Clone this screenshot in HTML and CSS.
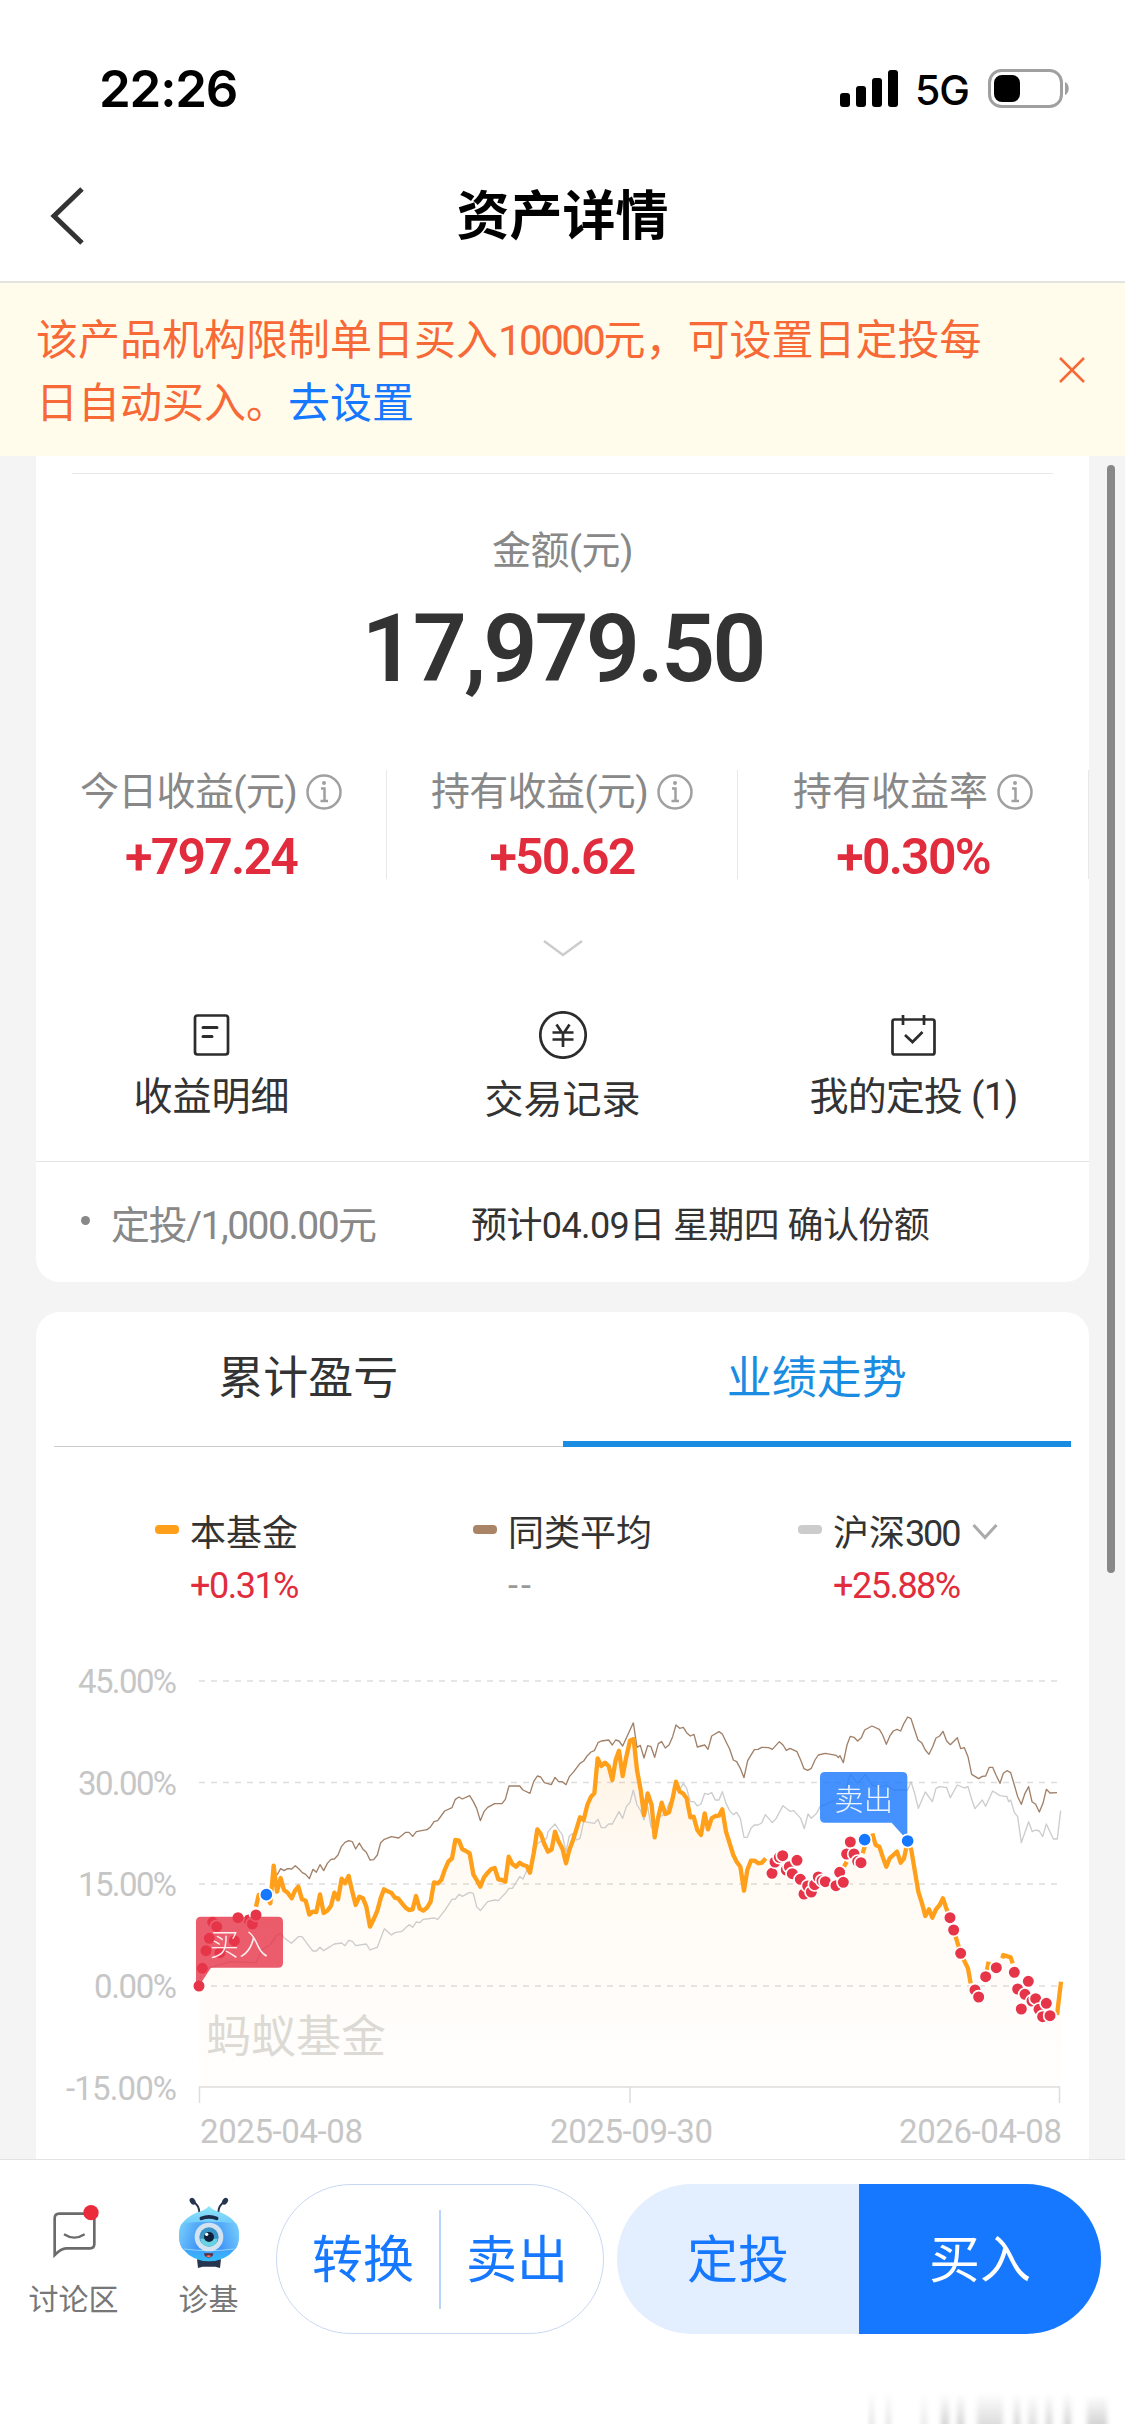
FILE: index.html
```html
<!DOCTYPE html>
<html lang="zh-CN">
<head>
  <meta charset="UTF-8">
  <meta name="viewport" content="width=device-width, initial-scale=1.0">
  <title>资产详情</title>
  <link rel="stylesheet" href="styles.css">
</head>
<body>
  <div class="screen">
    <!-- Status bar -->
    <div class="status-bar">
      <span class="time">22:26</span>
      <div class="status-icons">
        <svg class="signal" width="60" height="38" viewBox="0 0 60 38">
          <rect x="0" y="23" width="10" height="14" rx="3"/>
          <rect x="16" y="16" width="10" height="21" rx="3"/>
          <rect x="32" y="8" width="10" height="29" rx="3"/>
          <rect x="48" y="0" width="10" height="37" rx="3"/>
        </svg>
        <span class="network">5G</span>
        <svg class="battery" width="83" height="40" viewBox="0 0 83 40">
          <rect x="1.5" y="1.5" width="72" height="36" rx="12" fill="none" stroke="#a0a0a0" stroke-width="3"/>
          <rect x="6" y="6" width="26" height="27" rx="8" fill="#000"/>
          <path d="M77 13c5 2 5 11 0 13z" fill="#a0a0a0"/>
        </svg>
      </div>
    </div>

    <!-- Nav bar -->
    <header class="nav-bar">
      <svg class="back" width="36" height="60" viewBox="0 0 36 60"><path d="M32 3L4 30l28 27"/></svg>
      <h1>资产详情</h1>
    </header>

    <!-- Notice -->
    <div class="notice">
      <div class="notice-text">
        <p><span>该产品机构限制单日买入</span><span class="tight">10000</span><span>元，可设置日定投每</span></p>
        <p><span>日自动买入。</span><a href="#">去设置</a></p>
      </div>
      <svg class="close" width="26" height="26" viewBox="0 0 26 26"><path d="M1 1l24 24M25 1L1 25"/></svg>
    </div>

    <main class="main-content">
      <div class="scrollbar"></div>

      <!-- Asset summary -->
      <section class="card summary">
        <div class="top-line"></div>
        <div class="amount-label">金额(元)</div>
        <div class="amount">17,979.50</div>

        <div class="stats">
          <div class="stat">
            <div class="stat-label">今日收益(元)
              <svg class="info" viewBox="0 0 36 36"><circle cx="18" cy="18" r="16.5"/><path d="M15 14.5h3.5v12.5M14.5 27h7.5"/><circle class="dot" cx="18" cy="9" r="2"/></svg>
            </div>
            <div class="stat-value">+797.24</div>
          </div>
          <div class="stat">
            <div class="stat-label">持有收益(元)
              <svg class="info" viewBox="0 0 36 36"><circle cx="18" cy="18" r="16.5"/><path d="M15 14.5h3.5v12.5M14.5 27h7.5"/><circle class="dot" cx="18" cy="9" r="2"/></svg>
            </div>
            <div class="stat-value">+50.62</div>
          </div>
          <div class="stat">
            <div class="stat-label rate">持有收益率
              <svg class="info" viewBox="0 0 36 36"><circle cx="18" cy="18" r="16.5"/><path d="M15 14.5h3.5v12.5M14.5 27h7.5"/><circle class="dot" cx="18" cy="9" r="2"/></svg>
            </div>
            <div class="stat-value">+0.30%</div>
          </div>
        </div>

        <svg class="expand" width="40" height="18" viewBox="0 0 40 18"><path d="M1 2l19 14L39 2"/></svg>

        <div class="actions">
          <div class="action">
            <svg width="48" height="48" viewBox="0 0 48 48">
              <rect x="7" y="4.500" width="33" height="39" rx="2.5"/>
              <path d="M15 16.500h14M15 25.500h9" stroke-width="3" stroke-linecap="round"/>
            </svg>
            <span>收益明细</span>
          </div>
          <div class="action action-record">
            <svg width="48" height="48" viewBox="0 0 48 48">
              <circle cx="24" cy="24" r="22.700"/>
              <path d="M17.500 13.500l5 7.500M30.500 13.500l-5 7.500M13.500 21.500h21M13.500 28.500h21M24 21.500v14.500"/>
            </svg>
            <span>交易记录</span>
          </div>
          <div class="action">
            <svg width="48" height="48" viewBox="0 0 48 48">
              <rect x="2.500" y="8.500" width="42" height="35" rx="2"/>
              <path d="M13 4v10M34 4v10M15 24l7.500 7L32.500 21"/>
            </svg>
            <span class="my-plan">我的定投 (1)</span>
          </div>
        </div>

        <div class="plan">
          <span class="bullet"></span>
          <span class="plan-name">定投/1,000.00元</span>
          <span class="plan-info">预计04.09日 星期四 确认份额</span>
        </div>
      </section>

      <!-- Performance -->
      <section class="card performance">
        <div class="tabs">
          <div class="tab">累计盈亏</div>
          <div class="tab active">业绩走势</div>
        </div>

        <div class="legend">
          <div class="legend-item">
            <i class="swatch fund"></i>
            <div>
              <div class="legend-name">本基金</div>
              <div class="legend-value">+0.31%</div>
            </div>
          </div>
          <div class="legend-item">
            <i class="swatch average"></i>
            <div>
              <div class="legend-name">同类平均</div>
              <div class="legend-value none">--</div>
            </div>
          </div>
          <div class="legend-item">
            <i class="swatch index"></i>
            <div>
              <div class="legend-name">沪深<span class="tight">300</span></div>
              <div class="legend-value">+25.88%</div>
            </div>
            <svg class="more" width="26" height="18" viewBox="0 0 26 18"><path d="M1.500 2L13 14.500 24.500 2"/></svg>
          </div>
        </div>

        <svg class="chart" width="1053" height="519" viewBox="0 0 1053 519">
          <defs>
            <linearGradient id="fill" gradientUnits="userSpaceOnUse" x1="0" y1="300" x2="0" y2="1341">
              <stop offset="0" stop-color="#ff9f1a" stop-opacity=".12"/>
              <stop offset=".35" stop-color="#ff9f1a" stop-opacity=".05"/>
              <stop offset="1" stop-color="#ff9f1a" stop-opacity=".01"/>
            </linearGradient>
          </defs>

          <!-- Grid -->
          <g class="grid">
            <path d="M163 41h861M163 142.500h861M163 244h861M163 346h861" stroke-dasharray="6 6"/>
            <path d="M163.500 463v-16h860v16M594 447v16"/>
          </g>
          <g class="axis-y">
            <text x="141" y="53" textLength="99">45.00%</text>
            <text x="141" y="155" textLength="99">30.00%</text>
            <text x="141" y="256" textLength="99">15.00%</text>
            <text x="141" y="358" textLength="83">0.00%</text>
            <text x="141" y="460" textLength="111">-15.00%</text>
          </g>
          <g class="axis-x">
            <text x="164" y="503" textLength="163">2025-04-08</text>
            <text x="514" y="503" textLength="163">2025-09-30</text>
            <text x="863" y="503" textLength="163">2026-04-08</text>
          </g>
          <text class="watermark" x="170" y="413">蚂蚁基金</text>

          <g transform="translate(144 0) scale(.33333)">
            <!-- first half -->
            <polygon fill="url(#fill)" points="57,1341 57,1038 67,985 78,932 88,893 98,845 120,940 163,902 174,832 206,840 228,825 236,765 259,763 271,790 281,677 291,755 302,714 312,750 335,775 355,740 366,778 377,782 388,824 409,816 420,763 431,819 453,797 463,758 474,778 485,716 495,730 506,708 527,795 538,770 549,775 570,860 592,812 612,748 634,758 655,776 687,810 698,808 708,768 719,806 730,812 752,785 762,727 784,720 805,665 816,655 826,600 837,602 847,628 869,640 880,703 901,740 912,712 944,684 955,718 976,725 986,650 997,672 1019,668 1040,678 1050,698 1072,568 1104,635 1115,628 1125,575 1158,670 1200,532 1211,540 1222,495 1243,460 1253,355 1275,368 1297,420 1317,332 1328,408 1350,302 1361,298 1361,1341"/>
            <polyline class="line-index" points="57,1038 67,990 150,965 228,968 245,930 270,915 291,885 302,880 312,893 334,910 355,890 366,890 388,920 399,933 409,933 420,922 431,932 463,912 485,909 495,917 506,901 517,904 527,917 559,912 570,930 592,922 613,866 634,885 645,878 666,874 687,854 698,862 709,846 719,848 730,838 762,834 773,838 794,812 816,778 826,777 837,763 847,769 869,757 880,760 890,800 901,812 923,785 944,780 955,782 976,760 987,745 997,745 1019,710 1029,717 1040,692 1050,690 1061,655 1072,610 1100,595 1104,575 1125,552 1147,585 1158,635 1168,588 1179,580 1190,600 1200,595 1211,545 1243,550 1254,538 1264,563 1275,563 1286,552 1297,552 1317,515 1328,535 1339,500 1350,487 1360,450"/>
            <polyline class="line-average" points="291,705 302,686 312,692 323,686 335,687 346,677 357,687 367,698 377,703 388,716 399,688 409,697 420,674 431,692 442,670 453,658 463,657 474,645 484,620 495,607 506,602 517,605 527,627 538,609 549,628 559,637 570,660 581,659 592,645 602,608 613,598 634,590 656,594 677,577 687,577 698,589 709,575 741,569 752,560 762,545 773,542 794,513 816,503 826,478 837,471 847,477 869,467 880,485 890,505 901,542 912,515 923,502 944,491 966,491 976,478 987,438 1019,438 1029,450 1050,460 1061,425 1072,408 1082,411 1093,428 1114,434 1125,412 1136,425 1147,425 1158,434 1168,410 1179,398 1200,370 1211,363 1222,347 1233,336 1243,332 1254,308 1264,303 1286,300 1297,315 1307,300 1317,303 1328,318 1360,248"/>
            <polyline class="line-fund" points="228,800 236,765 259,763 271,790 281,677 291,755 302,714 312,750 323,758 335,775 345,752 355,740 366,778 377,782 388,824 398,815 409,816 420,763 431,819 442,812 453,797 463,758 474,778 485,716 495,730 506,708 517,755 527,795 538,770 549,775 559,800 570,860 581,838 592,812 602,775 612,748 623,754 634,758 645,773 655,776 666,790 677,803 687,810 698,808 708,768 719,806 730,812 741,803 752,785 762,727 773,730 784,720 794,690 805,665 816,655 826,600 837,602 847,628 858,633 869,640 880,703 890,720 901,740 912,712 923,698 933,688 944,684 955,718 966,720 976,725 986,650 997,672 1008,680 1019,668 1029,675 1040,678 1050,698 1061,640 1072,568 1083,583 1093,612 1104,635 1115,628 1125,575 1136,605 1147,625 1158,670 1168,630 1179,600 1190,565 1200,532 1211,540 1222,495 1233,470 1243,460 1253,355 1264,378 1275,368 1286,378 1297,420 1307,360 1317,332 1328,408 1339,350 1350,302 1361,298"/>

            <g class="buy">
              <circle cx="98" cy="847" r="19"/>
              <circle cx="110" cy="860" r="19"/>
              <circle cx="88" cy="895" r="19"/>
              <circle cx="78" cy="932" r="19"/>
              <circle cx="120" cy="938" r="19"/>
              <circle cx="163" cy="902" r="19"/>
              <circle cx="67" cy="985" r="19"/>
              <circle cx="206" cy="840" r="19"/>
              <circle cx="217" cy="852" r="19"/>
              <circle cx="174" cy="833" r="19"/>
              <circle cx="228" cy="825" r="19"/>
              <circle cx="57" cy="1038" r="19"/>
            </g>
            <circle class="sell" cx="259" cy="764" r="20"/>
            <path class="flag-buy" d="M63 830h231q15 0 15 15v123q0 15-15 15H93l-36 55h-9V845q0-15 15-15z"/>
            <text class="flag-text" x="177" y="946">买入</text>

            <!-- second half -->
            <g transform="translate(1320 0)">
              <polygon fill="url(#fill)" points="41,1341 41,298 51,390 62,450 72,525 83,460 104,592 125,488 147,517 168,425 200,475 211,532 221,530 243,585 254,520 264,568 307,508 318,575 340,645 361,680 372,752 382,690 393,662 437,655 456,700 488,647 541,717 574,757 616,725 670,726 691,606 723,668 734,599 757,580 799,680 831,635 852,655 863,603 884,690 895,755 916,828 969,775 990,833 1022,940 1055,1040 1076,1070 1108,965 1150,945 1183,997 1204,1107 1225,1024 1268,1130 1290,1126 1311,1125 1323,1025 1323,1341"/>
              <polyline class="line-index" points="40,450 51,495 61,510 72,540 83,500 93,560 104,570 115,535 136,520 147,490 158,480 168,445 179,450 190,430 200,445 211,485 222,485 232,498 243,492 254,460 264,463 275,458 286,480 297,480 307,455 318,490 329,512 340,524 350,517 361,535 372,592 382,592 393,565 403,555 414,555 425,549 436,524 457,548 468,536 489,497 510,514 521,512 542,535 553,566 564,522 574,535 590,520 600,500 660,475 680,440 691,403 713,430 736,403 756,435 778,440 788,440 799,435 820,450 863,450 873,425 884,460 895,505 916,456 937,485 948,445 959,440 980,443 991,473 1012,435 1033,444 1044,440 1055,478 1065,506 1087,480 1097,499 1118,453 1140,467 1161,470 1166,485 1172,480 1183,517 1193,530 1204,608 1226,545 1237,575 1247,570 1258,573 1268,590 1279,552 1300,597 1312,597 1322,512"/>
              <polyline class="line-average" points="40,248 51,322 61,316 72,354 83,317 93,320 104,352 115,311 125,305 136,324 147,315 158,290 168,255 179,265 190,262 200,278 211,288 222,283 232,321 254,315 264,328 275,288 297,275 307,282 318,305 329,327 340,360 350,365 361,385 372,413 383,362 403,329 414,328 425,322 446,323 457,328 478,305 489,315 499,331 510,325 531,335 542,360 552,386 563,391 574,385 585,360 595,345 616,340 649,346 655,353 660,347 670,368 681,315 691,289 702,292 713,303 724,293 734,270 756,258 778,268 788,285 799,313 810,287 820,273 831,268 842,273 852,250 863,231 873,236 884,270 894,300 905,308 916,330 927,343 938,320 948,294 959,288 969,274 980,303 991,314 1012,293 1022,326 1033,323 1044,350 1055,403 1076,416 1087,409 1097,408 1108,382 1118,382 1129,407 1140,430 1150,400 1161,392 1172,398 1183,435 1193,470 1204,493 1215,460 1226,440 1236,485 1247,493 1258,516 1269,490 1279,448 1290,459 1311,458"/>
              <polyline class="line-fund" points="30,302 41,298 51,390 62,450 72,525 83,460 95,495 104,592 115,530 125,488 136,522 147,517 158,475 168,425 179,455 189,460 200,475 211,532 221,530 232,570 243,585 254,520 264,568 275,535 286,528 297,527 307,508 318,575 329,610 340,645 350,665 361,680 372,752 382,690 393,662 404,662 415,670 426,668 437,655"/>
              <polyline class="line-fund" points="672,680 680,665"/>
              <polyline class="line-fund" points="728,640 734,620"/>
              <polyline class="line-fund" points="757,580 767,615 778,620 788,650 799,680 809,655 820,645 831,635 842,668 852,655 863,603 874,630 884,690 895,755 906,790 916,828 927,808 937,833 948,808 959,795 969,775 980,808 990,833 1001,870 1022,940 1044,985 1052,1030"/>
              <polyline class="line-fund" points="1097,1009 1106,965"/>
              <polyline class="line-fund" points="1147,955 1150,945 1172,952 1178,970"/>
              <polyline class="line-fund" points="1311,1125 1323,1025"/>

              <g class="buy">
                <circle cx="456" cy="700" r="19"/>
                <circle cx="465" cy="666" r="19"/>
                <circle cx="478" cy="652" r="19"/>
                <circle cx="488" cy="647" r="19"/>
                <circle cx="499" cy="690" r="19"/>
                <circle cx="508" cy="680" r="19"/>
                <circle cx="517" cy="701" r="19"/>
                <circle cx="531" cy="661" r="19"/>
                <circle cx="541" cy="718" r="19"/>
                <circle cx="552" cy="762" r="19"/>
                <circle cx="563" cy="738" r="19"/>
                <circle cx="574" cy="756" r="19"/>
                <circle cx="584" cy="734" r="19"/>
                <circle cx="595" cy="711" r="19"/>
                <circle cx="606" cy="722" r="19"/>
                <circle cx="616" cy="725" r="19"/>
                <circle cx="648" cy="737" r="19"/>
                <circle cx="659" cy="697" r="19"/>
                <circle cx="670" cy="727" r="19"/>
                <circle cx="680" cy="642" r="19"/>
                <circle cx="691" cy="606" r="19"/>
                <circle cx="702" cy="642" r="19"/>
                <circle cx="713" cy="664" r="19"/>
                <circle cx="723" cy="668" r="19"/>
                <circle cx="990" cy="833" r="19"/>
                <circle cx="1001" cy="870" r="19"/>
                <circle cx="1022" cy="940" r="19"/>
                <circle cx="1065" cy="1050" r="19"/>
                <circle cx="1076" cy="1071" r="19"/>
                <circle cx="1097" cy="1010" r="19"/>
                <circle cx="1129" cy="983" r="19"/>
                <circle cx="1183" cy="997" r="19"/>
                <circle cx="1193" cy="1047" r="19"/>
                <circle cx="1204" cy="1107" r="19"/>
                <circle cx="1215" cy="1063" r="19"/>
                <circle cx="1225" cy="1024" r="19"/>
                <circle cx="1236" cy="1083" r="19"/>
                <circle cx="1247" cy="1076" r="19"/>
                <circle cx="1257" cy="1108" r="19"/>
                <circle cx="1268" cy="1130" r="19"/>
                <circle cx="1279" cy="1090" r="19"/>
                <circle cx="1290" cy="1127" r="19"/>
              </g>
              <path class="flag-sell" d="M615 396h232q15 0 15 15v190L815 548H615q-15 0-15-15V411q0-15 15-15z"/>
              <text class="flag-text" x="731" y="511">卖出</text>
              <circle class="sell" cx="734" cy="599" r="20"/>
              <circle class="sell" cx="863" cy="603" r="20"/>
            </g>
          </g>
        </svg>
      </section>
    </main>

    <!-- Bottom bar -->
    <footer class="bottom-bar">
      <div class="entry entry-chat">
        <svg width="80" height="80" viewBox="100 66 240 240">
          <path d="M176 131h92q13 0 13 13v78q0 13-13 13h-72q-14 0-34 20V145q0-14 14-14z" fill="none" stroke="#6b6b6b" stroke-width="8"/>
          <path d="M190 193q31 20 62 0" fill="none" stroke="#6b6b6b" stroke-width="7"/>
          <circle cx="271" cy="128" r="23" fill="#eb2b3c"/>
        </svg>
        <span>讨论区</span>
      </div>
      <div class="entry entry-robot">
        <svg width="80" height="80" viewBox="506 66 240 240">
          <defs>
            <linearGradient id="body" x1="0" y1="0" x2="0" y2="1">
              <stop offset="0" stop-color="#8fe6f8"/>
              <stop offset=".35" stop-color="#6cc8fb"/>
              <stop offset=".75" stop-color="#429cfb"/>
              <stop offset="1" stop-color="#32bdfa"/>
            </linearGradient>
            <linearGradient id="side" x1="0" y1="0" x2="1" y2="0">
              <stop offset="0" stop-color="#7fd4fa"/>
              <stop offset=".3" stop-color="#3f92f7"/>
              <stop offset=".7" stop-color="#3f92f7"/>
              <stop offset="1" stop-color="#7fd4fa"/>
            </linearGradient>
          </defs>
          <path d="M577 95q20 10 20 34M674 95q-20 10-20 34" fill="none" stroke="#27364f" stroke-width="6"/>
          <ellipse cx="577" cy="94" rx="8" ry="11" transform="rotate(-35 577 94)" fill="#27364f"/>
          <ellipse cx="674" cy="94" rx="8" ry="11" transform="rotate(35 674 94)" fill="#27364f"/>
          <path d="M590 268h72l-3 26-14-4h-38l-14 4z" fill="#27364f"/>
          <path d="M626 108q12 14 38 20 28 12 44 34 8 10 8 36t-12 40q-30 36-78 36t-78-36q-12-14-12-40t8-36q16-22 44-34 26-6 38-20z" fill="url(#body)"/>
          <path d="M545 160q81-10 162 0 9 12 9 38t-12 40q-78 10-156 0-12-14-12-40t9-38z" fill="url(#side)" opacity=".6"/>
          <path d="M550 237q76 10 152 0" fill="none" stroke="#8fd3ff" stroke-width="3"/>
          <path d="M603 145q23-9 46 0" fill="none" stroke="#1c2c4a" stroke-width="11" stroke-linecap="round"/>
          <circle cx="626" cy="201" r="43" fill="#d3e2f0"/>
          <circle cx="626" cy="201" r="29" fill="#3b93c6"/>
          <path d="M600 206a26 24 0 0 0 52 0z" fill="#68d2e3"/>
          <circle cx="626" cy="201" r="15" fill="#10203a"/>
          <circle cx="619" cy="193" r="5" fill="#fff"/>
          <path d="M611 250h28q-2 13-14 13t-14-13z" fill="#5e2b3c"/>
          <path d="M617 258q8-5 16 0-8 7-16 0z" fill="#ff7d6e"/>
        </svg>
        <span>诊基</span>
      </div>
      <div class="pill pill-outline">
        <span>转换</span>
        <i class="pill-line"></i>
        <span>卖出</span>
      </div>
      <div class="pill pill-solid">
        <span class="invest">定投</span>
        <span class="purchase">买入</span>
      </div>
      <svg class="smudge" width="250" height="44" viewBox="0 0 250 44">
        <defs>
          <linearGradient id="fade" x1="0" y1="0" x2="0" y2="1">
            <stop offset="0" stop-color="#aaa" stop-opacity="0"/>
            <stop offset="1" stop-color="#aaa" stop-opacity=".5"/>
          </linearGradient>
          <filter id="soft" x="-20%" y="-5%" width="140%" height="110%"><feGaussianBlur stdDeviation="2.5 .4"/></filter>
        </defs>
        <g fill="url(#fade)" filter="url(#soft)">
          <rect x="3" y="4" width="3" height="33"/>
          <rect x="20" y="4" width="3" height="33"/>
          <rect x="54" y="6" width="6" height="31" opacity=".5"/>
          <rect x="74" y="6" width="8" height="31"/>
          <rect x="90" y="6" width="7" height="31"/>
          <rect x="110" y="6" width="26" height="31" opacity=".8"/>
          <rect x="147" y="6" width="6" height="31"/>
          <rect x="161" y="6" width="9" height="31" opacity=".7"/>
          <rect x="179" y="6" width="6" height="31"/>
          <rect x="197" y="6" width="7" height="31"/>
          <rect x="220" y="8" width="20" height="29"/>
        </g>
      </svg>
    </footer>
  </div>
</body>
</html>
```

FILE: styles.css
```css
:root {
  --text-primary: #333;
  --text-secondary: #888;
  --red: #e02c3c;
  --blue: #1677ff;
  --tab-blue: #1a8de2;
  --line: #e8e8e8;
}

* {
  margin: 0;
  padding: 0;
  box-sizing: border-box;
}

body {
  font-family: Roboto, "Noto Sans CJK SC", sans-serif;
  color: var(--text-primary);
  background: #fff;
}

.screen {
  width: 1125px;
  height: 2436px;
  display: flex;
  flex-direction: column;
  overflow: hidden;
}

.tight {
  letter-spacing: -0.06em;
}

/* Status bar */
.status-bar {
  height: 150px;
  padding: 27px 54px 0 99px;
  display: flex;
  align-items: center;
  justify-content: space-between;
  color: #000;
}

.time {
  font-family: Inter, sans-serif;
  font-size: 51px;
  font-weight: 600;
  letter-spacing: -1.2px;
}

.status-icons {
  display: flex;
  align-items: center;
}

.network {
  font-family: Inter, sans-serif;
  font-size: 41px;
  font-weight: 500;
  letter-spacing: -1px;
  margin: 2px 19px 0 15px;
}

/* Nav bar */
.nav-bar {
  height: 133px;
  padding-top: 3px;
  position: relative;
  display: flex;
  align-items: center;
  justify-content: center;
  border-bottom: 2px solid #e3e3df;
}

.nav-bar h1 {
  font-size: 53px;
  font-weight: 700;
  line-height: 76px;
  color: #000;
}

.back {
  position: absolute;
  left: 50px;
  top: 36px;
  fill: none;
  stroke: #333;
  stroke-width: 5;
}

/* Notice */
.notice {
  height: 173px;
  padding: 0 40px 0 36px;
  display: flex;
  align-items: center;
  justify-content: space-between;
  background: #fffcec;
}

.notice-text {
  padding-top: 4px;
}

.notice p {
  font-size: 42px;
  line-height: 63px;
  color: #f76936;
}

.notice a {
  color: var(--blue);
  text-decoration: none;
}

.close {
  fill: none;
  stroke: #f76936;
  stroke-width: 2.5;
}

/* Content */
.main-content {
  height: 1703px;
  padding: 0 36px;
  position: relative;
  background: #f4f4f4;
  overflow: hidden;
}

.scrollbar {
  position: absolute;
  top: 9px;
  right: 10px;
  width: 8px;
  height: 1108px;
  border-radius: 4px;
  background: #888;
}

.card {
  background: #fff;
  border-radius: 24px;
}

.summary {
  height: 826px;
  padding-top: 17px;
  border-radius: 0 0 24px 24px;
}

.top-line {
  height: 1px;
  margin: 0 36px;
  background: var(--line);
}

.amount-label {
  margin-top: 49px;
  font-size: 39px;
  line-height: 56px;
  letter-spacing: -0.6px;
  text-align: center;
  color: var(--text-secondary);
}

.amount {
  margin-top: 20px;
  font-size: 95px;
  font-weight: 600;
  line-height: 100px;
  letter-spacing: -3px;
  text-align: center;
}

.stats {
  display: flex;
  margin-top: 71px;
}

.stat {
  width: 351px;
  height: 109px;
  border-right: 1px solid var(--line);
}

.stat-label {
  display: flex;
  align-items: center;
  justify-content: center;
  gap: 9px;
  font-size: 39px;
  line-height: 44px;
  letter-spacing: -0.7px;
  color: var(--text-secondary);
}

.stat-label.rate {
  letter-spacing: 0;
}

.info {
  width: 36px;
  height: 36px;
  fill: none;
  stroke: #a0a0a0;
  stroke-width: 2.5;
}

.info .dot {
  fill: #a0a0a0;
  stroke: none;
}

.stat-value {
  margin-top: 19px;
  font-size: 50px;
  font-weight: 600;
  line-height: 48px;
  letter-spacing: -1.8px;
  text-align: center;
  color: var(--red);
}

.expand {
  display: block;
  margin: 60px auto 0;
  fill: none;
  stroke: #ccc;
  stroke-width: 2.5;
}

.actions {
  display: flex;
  margin-top: 54px;
}

.action {
  width: 351px;
  display: flex;
  flex-direction: column;
  align-items: center;
}

.action svg {
  fill: none;
  stroke: #2c2c2c;
  stroke-width: 2.7;
}

.action span {
  margin-top: 16px;
  font-size: 39px;
  line-height: 44px;
}

.action-record span {
  margin-top: 19px;
}

.action .my-plan {
  letter-spacing: -0.8px;
}

.plan {
  height: 121px;
  margin-top: 39px;
  padding-left: 45px;
  display: flex;
  align-items: center;
  border-top: 1px solid #e3e3e3;
}

.bullet {
  width: 9px;
  height: 9px;
  margin: -4px 21px 0 0;
  border-radius: 50%;
  background: var(--text-secondary);
}

.plan-name {
  width: 360px;
  font-size: 39px;
  letter-spacing: -1.5px;
  color: var(--text-secondary);
}

.plan-info {
  font-size: 36px;
  letter-spacing: -0.6px;
}

/* Performance */
.performance {
  height: 900px;
  margin-top: 30px;
}

.tabs {
  display: flex;
  height: 135px;
  margin: 0 18px;
}

.tab {
  flex: 1;
  font-size: 45px;
  line-height: 133px;
  text-align: center;
  border-bottom: 1px solid #ccc;
}

.tab.active {
  color: var(--tab-blue);
  border-bottom: 6px solid var(--tab-blue);
}

.legend {
  display: grid;
  grid-template-columns: 318px 325px auto;
  margin-top: 63px;
  padding-left: 119px;
}

.legend-item {
  display: flex;
}

.swatch {
  width: 24px;
  height: 9px;
  margin: 15px 11px 0 0;
  border-radius: 4px;
}

.swatch.fund {
  background: #ff9f1a;
}

.swatch.average {
  background: #a98467;
}

.swatch.index {
  background: #ccc;
}

.legend-name,
.legend-value {
  font-size: 36px;
  line-height: 48px;
}

.legend-value {
  margin-top: 4px;
  letter-spacing: -1.5px;
  color: var(--red);
}

.legend-value.none {
  letter-spacing: 3px;
  color: #999;
}

.more {
  margin: 13px 0 0 12px;
  fill: none;
  stroke: #aaa;
  stroke-width: 3;
}

/* Chart */
.chart {
  display: block;
  margin-top: 30px;
}

.grid {
  fill: none;
  stroke: #ddd;
  stroke-width: 1.5;
}

.axis-y,
.axis-x {
  font-size: 33px;
  fill: #c6c6c6;
}

.axis-y {
  text-anchor: end;
}

.watermark {
  font-size: 45px;
  fill: #dcdbd8;
}

.line-fund,
.line-average,
.line-index {
  fill: none;
  stroke-linejoin: round;
}

.line-fund {
  stroke: #ff9f1a;
  stroke-width: 13;
}

.line-average {
  stroke: #a08068;
  stroke-width: 4;
}

.line-index {
  stroke: #ccc;
  stroke-width: 4;
}

.buy {
  fill: #e63549;
  stroke: #fff;
  stroke-width: 5;
}

.sell {
  fill: var(--blue);
  stroke: #fff;
  stroke-width: 5;
}

.flag-buy {
  fill: #e63549;
  opacity: 0.8;
}

.flag-sell {
  fill: var(--blue);
  opacity: 0.8;
}

.flag-text {
  font-size: 88px;
  font-weight: 300;
  text-anchor: middle;
  fill: #fff;
  opacity: 0.9;
}

/* Bottom bar */
.bottom-bar {
  height: 277px;
  padding-top: 24px;
  position: relative;
  display: flex;
  align-items: flex-start;
  border-top: 1px solid #e3e3e3;
  background: #fff;
}

.entry {
  padding-top: 8px;
  display: flex;
  flex-direction: column;
  align-items: center;
  font-size: 30px;
  line-height: 40px;
  color: #777;
}

.entry span {
  margin-top: 8px;
}

.entry-chat {
  width: 147px;
}

.entry-robot {
  width: 123px;
}

.pill {
  height: 150px;
  display: flex;
  align-items: center;
  border-radius: 75px;
  font-size: 51px;
  color: var(--blue);
}

.pill span {
  flex: 1;
  height: 150px;
  line-height: 153px;
  text-align: center;
}

.pill-outline {
  width: 328px;
  margin-left: 6px;
  padding: 0 10px;
  border: 1.5px solid #c9d8f2;
}

.pill-line {
  width: 2px;
  height: 99px;
  background: #bcd6fb;
}

.pill-solid {
  width: 484px;
  margin-left: 13px;
  overflow: hidden;
}

.invest {
  background: #e3eefe;
}

.purchase {
  background: var(--blue);
  color: #fff;
}

.smudge {
  position: absolute;
  right: 8px;
  bottom: 5px;
}
```
